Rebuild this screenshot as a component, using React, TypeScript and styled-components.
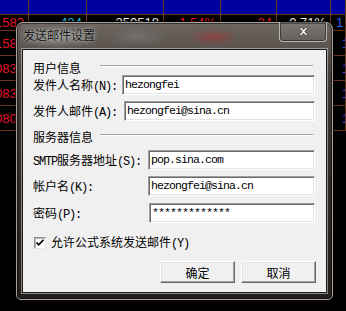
import React from "react";
import styled, { createGlobalStyle } from "styled-components";

// GLOBAL --------------------------->

const GlobalStyle = createGlobalStyle`
  html, body {
    margin: 0;
    padding: 0;
    background: #000;
  }
  body {
    width: 346px;
    height: 311px;
    overflow: hidden;
    font-family: "Noto Sans CJK SC", sans-serif;
  }
`;

// BACKGROUND QUOTE TABLE --------------------------->

const Screen = styled.div`
  position: relative;
  width: 346px;
  height: 311px;
  background: #000;
  overflow: hidden;
`;

const Board = styled.div`
  display: grid;
  grid-template-columns: 29px 58px 77px 57px 56px 54px 15px;
  grid-template-rows: 15px 16px repeat(4, 25px);
`;

const HeadCell = styled.div`
  box-sizing: border-box;
  background: #0000a0;
  border-right: 1px solid #6b3318;
  border-bottom: 1px solid #6b3318;
`;

const Cell = styled.div<{ $color: string; $indent?: number; $left?: boolean }>`
  box-sizing: border-box;
  display: flex;
  align-items: center;
  justify-content: ${(p) => (p.$left ? "flex-start" : "flex-end")};
  padding: 0 ${(p) => (p.$left ? 0 : 4)}px 0 ${(p) => p.$indent ?? 0}px;
  border-right: 1px solid #6b3318;
  border-bottom: 1px solid #6b3318;
  color: ${(p) => p.$color};
  font: 13px "Liberation Sans", Arial, sans-serif;
  white-space: nowrap;
  overflow: hidden;
`;

const RED = "#e8102a";
const CYAN = "#20b8d8";
const WHITE = "#e8e8e8";
const BLUE = "#3a5cff";

const quotes = [
  ["1582", "434", "350518", "1.54%", "24", "0.71%", "1"],
  ["1583", "212", "180422", "1.60%", "18", "0.65%", "1"],
  ["0831", "97", "90211", "0.82%", "11", "0.40%", "1"],
  ["0832", "65", "70013", "0.81%", "9", "0.33%", "1"],
  ["0806", "51", "61120", "0.77%", "7", "0.28%", "1"],
];
const colColors = [RED, CYAN, WHITE, RED, RED, WHITE, BLUE];

// DIALOG --------------------------->

const Dialog = styled.div`
  position: absolute;
  left: 16px;
  top: 22px;
  width: 317px;
  height: 278px;
  box-sizing: border-box;
  padding: 0 5px 6px 5px;
  display: flex;
  flex-direction: column;
  border: 1px solid #a8a29c;
  border-radius: 7px 7px 5px 5px;
  background:
    radial-gradient(ellipse 26px 9px at 196px 14px, rgba(180, 40, 40, 0.45), transparent),
    radial-gradient(ellipse 30px 10px at 120px 14px, rgba(200, 200, 200, 0.18), transparent),
    radial-gradient(ellipse 40px 12px at 42px 14px, rgba(210, 230, 225, 0.35), transparent),
    linear-gradient(to bottom, #6c6560 0px, #5a534e 26px, #403a36 60px, #2e2926 160px, #241f1d 100%);
  box-shadow: inset 0 0 0 1px rgba(0, 0, 0, 0.5), 0 0 0 1px rgba(0, 0, 0, 0.7);
`;

const TitleBar = styled.div`
  height: 26px;
  flex: none;
  display: flex;
  justify-content: space-between;
  align-items: flex-start;
`;

const Title = styled.div`
  margin-left: 1px;
  padding-top: 4px;
  font-size: 12px;
  line-height: 16px;
  color: #151515;
  text-shadow: 0 0 6px rgba(255, 255, 255, 0.55), 0 0 2px rgba(255, 255, 255, 0.4);
`;

const CloseButton = styled.div`
  margin-top: -1px;
  width: 48px;
  height: 20px;
  box-sizing: border-box;
  display: flex;
  align-items: center;
  justify-content: center;
  border: 1px solid #bcb6b0;
  border-top: none;
  border-radius: 0 0 4px 4px;
  background: linear-gradient(to bottom, rgba(255, 255, 255, 0.12), rgba(255, 255, 255, 0.04));
  box-shadow: inset 0 0 0 1px rgba(0, 0, 0, 0.45);
`;

const Client = styled.div`
  flex: 1;
  box-sizing: border-box;
  padding: 11px 11px 0 10px;
  display: flex;
  flex-direction: column;
  background: #f0f0f0;
  border: 1px solid #1a1a1a;
  box-shadow: 0 0 0 1px rgba(215, 215, 215, 0.55);
  color: #000;
  font-size: 12px;
`;

const GroupHeader = styled.div<{ $top: number }>`
  display: flex;
  align-items: center;
  height: 14px;
  margin-top: ${(p) => p.$top}px;
`;

const GroupTitle = styled.div`
  width: 67px;
  flex: none;
  line-height: 14px;
  white-space: nowrap;
`;

const Rule = styled.div`
  flex: 1;
  margin: -4px 2px 0 0;
  border-top: 1px solid #a0a0a0;
  border-bottom: 1px solid #fff;
`;

const Row = styled.div<{ $top: number }>`
  display: flex;
  align-items: center;
  height: 20px;
  margin-top: ${(p) => p.$top}px;
`;

const Label = styled.div<{ $width: number }>`
  width: ${(p) => p.$width}px;
  flex: none;
  line-height: 20px;
  white-space: nowrap;
  overflow: hidden;
`;

const Latin = styled.span`
  font: 12px "Liberation Mono", monospace;
  letter-spacing: -1.2px;
`;

const Field = styled.div`
  flex: 1 1 0;
  min-width: 0;
  height: 20px;
  box-sizing: border-box;
  padding-left: 2px;
  background: #fff;
  border: 1px solid;
  border-color: #a0a0a0 #fff #fff #a0a0a0;
  box-shadow: inset 1px 1px 0 #696969, inset -1px -1px 0 #e3e3e3;
  font: 11.5px "Liberation Mono", monospace;
  letter-spacing: -0.9px;
  line-height: 18px;
  white-space: nowrap;
  overflow: hidden;
`;

const CheckRow = styled.label`
  display: flex;
  align-items: center;
  gap: 5px;
  height: 14px;
  margin-top: 13px;
  line-height: 14px;
`;

const CheckBox = styled.span`
  width: 12px;
  height: 12px;
  margin-left: 1px;
  box-sizing: border-box;
  display: flex;
  align-items: center;
  justify-content: center;
  background: #fff;
  border: 1px solid;
  border-color: #8f8f8f #e8e8e8 #e8e8e8 #8f8f8f;
  box-shadow: inset 1px 1px 0 #b8b8b8;
`;

const ButtonBar = styled.div`
  display: flex;
  justify-content: flex-end;
  gap: 6px;
  margin: 11px -1px 0 0;
`;

const Button = styled.button`
  width: 75px;
  height: 22px;
  padding: 0;
  box-sizing: border-box;
  background: #f0f0f0;
  border: 1px solid;
  border-color: #fff #696969 #696969 #fff;
  box-shadow: inset -1px -1px 0 #a0a0a0, inset 1px 1px 0 #e3e3e3;
  font: 12px "Noto Sans CJK SC", sans-serif;
  color: #000;
`;

// FUNCTIONAL COMPONENT --------------------------->

const App = () => {
  return (
    <Screen>
      <GlobalStyle />
      <Board>
        {colColors.map((_, i) => (
          <HeadCell key={"h" + i} />
        ))}
        {quotes.map((row, r) =>
          row.map((v, c) => (
            <Cell
              key={r + "-" + c}
              $color={colColors[c]}
              $left={c === 6}
              $indent={c === 6 ? (r === 0 ? 5 : 11) : 0}
            >
              {v}
            </Cell>
          ))
        )}
      </Board>

      <Dialog>
        <TitleBar>
          <Title>发送邮件设置</Title>
          <CloseButton>
            <svg width="11" height="9" viewBox="0 0 11 9">
              <path
                d="M1 0.5h2.6L5.5 3 7.4 0.5H10L6.8 4.5 10 8.5H7.4L5.5 6 3.6 8.5H1l3.2-4z"
                fill="#fff"
                stroke="#2a2522"
                strokeWidth="0.6"
              />
            </svg>
          </CloseButton>
        </TitleBar>

        <Client>
          <GroupHeader $top={0}>
            <GroupTitle>用户信息</GroupTitle>
            <Rule />
          </GroupHeader>
          <Row $top={0}>
            <Label $width={89}>
              发件人名称<Latin>(N):</Latin>
            </Label>
            <Field>hezongfei</Field>
          </Row>
          <Row $top={6}>
            <Label $width={91}>
              发件人邮件<Latin>(A):</Latin>
            </Label>
            <Field>hezongfei@sina.cn</Field>
          </Row>

          <GroupHeader $top={9}>
            <GroupTitle>服务器信息</GroupTitle>
            <Rule />
          </GroupHeader>
          <Row $top={6}>
            <Label $width={115}>
              <Latin>SMTP</Latin>服务器地址<Latin>(S):</Latin>
            </Label>
            <Field>pop.sina.com</Field>
          </Row>
          <Row $top={6}>
            <Label $width={115}>
              帐户名<Latin>(K):</Latin>
            </Label>
            <Field>hezongfei@sina.cn</Field>
          </Row>
          <Row $top={7}>
            <Label $width={116}>
              密码<Latin>(P):</Latin>
            </Label>
            <Field>*************</Field>
          </Row>

          <CheckRow>
            <CheckBox>
              <svg width="8" height="8" viewBox="0 0 8 8">
                <path d="M0.5 3.5l2.2 2.3L7.5 0.8" fill="none" stroke="#000" strokeWidth="1.8" />
              </svg>
            </CheckBox>
            <span>
              允许公式系统发送邮件<Latin>(Y)</Latin>
            </span>
          </CheckRow>

          <ButtonBar>
            <Button>确定</Button>
            <Button>取消</Button>
          </ButtonBar>
        </Client>
      </Dialog>
    </Screen>
  );
};

export default App;
